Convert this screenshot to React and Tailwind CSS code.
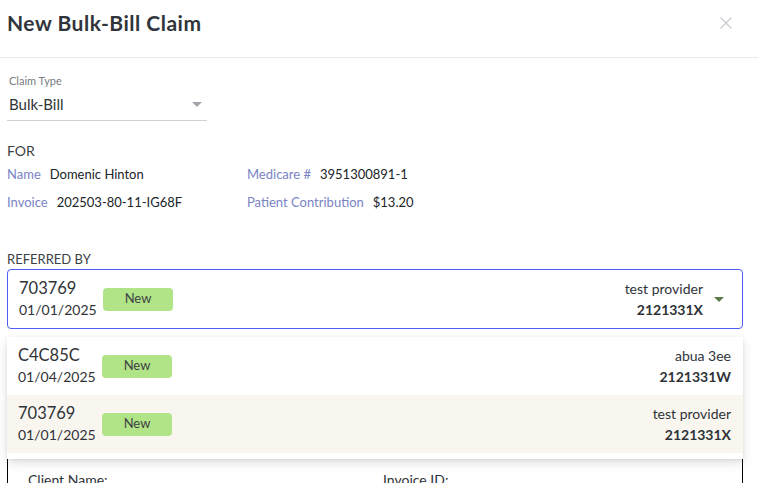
import { X } from 'lucide-react';

const options = [
  { code: 'C4C85C', date: '01/04/2025', status: 'New', provider: 'abua 3ee', number: '2121331W' },
  { code: '703769', date: '01/01/2025', status: 'New', provider: 'test provider', number: '2121331X', active: true },
];

function Caret({ className }) {
  return (
    <svg width="10" height="5" viewBox="0 0 10 5" className={className}>
      <path d="M0 0h10L5 5z" fill="currentColor" />
    </svg>
  );
}

function Badge({ children }) {
  return (
    <span className="w-[70px] h-[23px] rounded-[4px] bg-[#b1e487] text-[#3d4144] text-[13px] flex items-center justify-center">
      {children}
    </span>
  );
}

function ReferralRow({ item, className = '' }) {
  return (
    <div className={`flex items-center ${className}`}>
      <div className="w-[84px] text-[#2f3337]">
        <div className="text-[16.5px] leading-[21px]">{item.code}</div>
        <div className="text-[14px] leading-[22px]">{item.date}</div>
      </div>
      <Badge>{item.status}</Badge>
      <div className="ml-auto text-right text-[#2f3337] text-[14px] leading-[21px]">
        <div>{item.provider}</div>
        <div className="font-bold">{item.number}</div>
      </div>
    </div>
  );
}

export default function App() {
  const selected = options[1];

  return (
    <div className="w-[758px] h-[483px] bg-white overflow-hidden font-['Lato',sans-serif] text-[#2f3337]">
      {/* Header */}
      <div className="h-[58px] flex items-center justify-between pl-[7px] pr-[22px] border-b border-[#e8e8ec]">
        <h2 className="text-[21px] tracking-[0.5px] font-bold text-[#30353b] -mt-[12px]">New Bulk-Bill Claim</h2>
        <X className="w-[20px] h-[20px] text-[#c9cbd0] -mt-[12px]" strokeWidth={1.5} />
      </div>

      <div className="px-[7px]">
        {/* Claim type */}
        <div className="mt-[16px] w-[200px]">
          <div className="text-[11px] leading-[14px] text-[#777b80] pl-[2px]">Claim Type</div>
          <div className="flex items-center justify-between h-[33px] border-b border-[#cfd0d6] pl-[2px] pr-[5px]">
            <span className="text-[15px] text-[#2f3337]">Bulk-Bill</span>
            <Caret className="text-[#a4a6ab]" />
          </div>
        </div>

        {/* Patient details */}
        <div className="mt-[21px] text-[14px] leading-[18px] text-[#3b3f44]">FOR</div>
        <div className="grid grid-cols-[240px_1fr] text-[13px] leading-[18px] mt-[5px] gap-y-[10px]">
          <div className="flex gap-[9px]">
            <span className="text-[#7984c4]">Name</span>
            <span className="text-[#202428]">Domenic Hinton</span>
          </div>
          <div className="flex gap-[9px]">
            <span className="text-[#7984c4]">Medicare #</span>
            <span className="text-[#202428]">3951300891-1</span>
          </div>
          <div className="flex gap-[9px]">
            <span className="text-[#7984c4]">Invoice</span>
            <span className="text-[#202428]">202503-80-11-IG68F</span>
          </div>
          <div className="flex gap-[9px]">
            <span className="text-[#7984c4]">Patient Contribution</span>
            <span className="text-[#202428]">$13.20</span>
          </div>
        </div>

        {/* Referral select */}
        <div className="mt-[40px] text-[13px] leading-[16px] text-[#3b3f44] uppercase">Referred by</div>
        <div className="relative w-[736px] mt-[2px]">
          <div className="h-[60px] border border-[#4d5ef0] rounded-[4px] flex items-center pl-[11px] pr-[18px]">
            <ReferralRow item={selected} className="flex-1 pr-[11px]" />
            <Caret className="text-[#5b7a4a]" />
          </div>

          {/* Open menu */}
          <div className="absolute left-0 right-0 top-[68px] z-10 bg-white shadow-[0_4px_10px_rgba(0,0,0,0.12),0_1px_3px_rgba(0,0,0,0.08)] pb-[6px]">
            {options.map((item) => (
              <ReferralRow
                key={item.code}
                item={item}
                className={`h-[58px] pl-[11px] pr-[12px] ${item.active ? 'bg-[#f9f6f0]' : ''}`}
              />
            ))}
          </div>

          {/* Claim summary behind the menu */}
          <div className="mt-[127px] border border-black h-[80px] px-[20px] pt-[12px] grid grid-cols-[355px_1fr] text-[14px] text-[#2f3337]">
            <span>Client Name:</span>
            <span>Invoice ID:</span>
          </div>
        </div>
      </div>
    </div>
  );
}
